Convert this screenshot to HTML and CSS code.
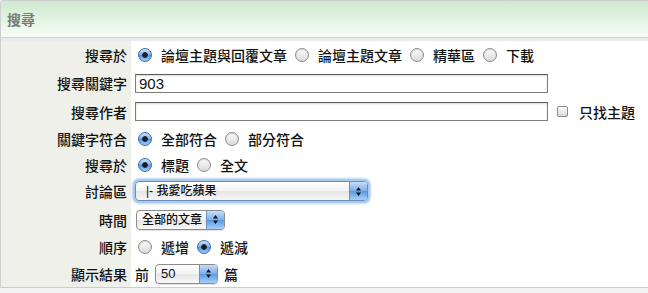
FILE: index.html
```html
<!DOCTYPE html>
<html lang="zh-Hant">
<head>
    <meta charset="UTF-8">
    <title>搜尋</title>
    <link rel="stylesheet" href="styles.css">
</head>
<body>
<div class="panel">
    <div class="panel-head">搜尋</div>
    <div class="search-form">
        <div class="label">搜尋於</div>
        <div class="field">
            <label class="opt"><input type="radio" name="area" checked>論壇主題與回覆文章</label>
            <label class="opt"><input type="radio" name="area">論壇主題文章</label>
            <label class="opt"><input type="radio" name="area">精華區</label>
            <label class="opt"><input type="radio" name="area">下載</label>
        </div>

        <div class="label">搜尋關鍵字</div>
        <div class="field">
            <input type="text" class="text-input" value="903">
        </div>

        <div class="label">搜尋作者</div>
        <div class="field">
            <input type="text" class="text-input">
            <label class="opt check-opt"><input type="checkbox">只找主題</label>
        </div>

        <div class="label">關鍵字符合</div>
        <div class="field">
            <label class="opt"><input type="radio" name="match" checked>全部符合</label>
            <label class="opt"><input type="radio" name="match">部分符合</label>
        </div>

        <div class="label">搜尋於</div>
        <div class="field">
            <label class="opt"><input type="radio" name="scope" checked>標題</label>
            <label class="opt"><input type="radio" name="scope">全文</label>
        </div>

        <div class="label">討論區</div>
        <div class="field">
            <div class="popup popup-forum focused">
                <span class="popup-text">|- 我愛吃蘋果</span>
                <span class="popup-arrow">
                    <svg width="7" height="11" viewBox="0 0 7 11"><path d="M3.5 1L6 4.5H1z M1 6.5H6L3.5 10z" fill="#111"/></svg>
                </span>
            </div>
        </div>

        <div class="label">時間</div>
        <div class="field">
            <div class="popup popup-time">
                <span class="popup-text">全部的文章</span>
                <span class="popup-arrow">
                    <svg width="7" height="11" viewBox="0 0 7 11"><path d="M3.5 1L6 4.5H1z M1 6.5H6L3.5 10z" fill="#111"/></svg>
                </span>
            </div>
        </div>

        <div class="label">順序</div>
        <div class="field">
            <label class="opt"><input type="radio" name="order">遞增</label>
            <label class="opt"><input type="radio" name="order" checked>遞減</label>
        </div>

        <div class="label">顯示結果</div>
        <div class="field">
            <span>前</span>
            <div class="popup popup-count">
                <span class="popup-text num">50</span>
                <span class="popup-arrow">
                    <svg width="7" height="11" viewBox="0 0 7 11"><path d="M3.5 1L6 4.5H1z M1 6.5H6L3.5 10z" fill="#111"/></svg>
                </span>
            </div>
            <span>篇</span>
        </div>
    </div>
</div>
</body>
</html>
```

FILE: styles.css
```css
body {
    margin: 0;
    font-family: "Liberation Sans", "Noto Sans CJK TC", sans-serif;
    font-size: 14px;
    font-weight: 500;
    color: #111;
    background-color: #f3f3f3;
}
.panel {
    background-color: #fff;
    border-left: 1px solid #cfcfcf;
    border-top: 1px solid #cfcfcf;
    border-top-left-radius: 4px;
    overflow: hidden;
}
.panel-head {
    height: 36px;
    line-height: 38px;
    padding-left: 6px;
    font-weight: bold;
    color: #777c77;
    background: linear-gradient(#cfe8cf, #f7fef5);
    border-bottom: 1px solid #d3d3d3;
}
.search-form {
    display: grid;
    grid-template-columns: 130px 1fr;
    grid-template-rows: 28px 28px 29px 26px 25px 28px 29px 26px 27px;
    border-top: 3px solid #ebebeb;
    border-bottom: 1px solid #cdcdcd;
}
.label {
    display: flex;
    align-items: center;
    justify-content: flex-end;
    padding-right: 4px;
    background-color: #eff0e9;
}
.field {
    display: flex;
    align-items: center;
    padding-left: 4px;
    gap: 6px;
}
.opt {
    display: flex;
    align-items: center;
    gap: 9px;
    margin-right: 2px;
}
.opt:first-child {
    margin-left: 3px;
}
input[type="radio"] {
    appearance: none;
    width: 14px;
    height: 14px;
    margin: 0;
    border-radius: 50%;
    border: 1px solid #8d8d8d;
    background: linear-gradient(#fdfdfd, #dadada);
    box-shadow: inset 0 1px 1px rgba(0, 0, 0, 0.15);
}
input[type="radio"]:checked {
    border-color: #3f6ca5;
    background: radial-gradient(circle, #1b1b2b 0 2.4px, transparent 3.2px),
                linear-gradient(#cfe4fb, #79aeec 50%, #5093e2 51%, #a4cdf8);
    box-shadow: none;
}
input[type="checkbox"] {
    appearance: none;
    width: 11px;
    height: 11px;
    margin: 0;
    border: 1px solid #8a8a8a;
    border-radius: 2px;
    background: linear-gradient(#fdfdfd, #d8d8d8);
}
.check-opt {
    margin-left: 3px;
    gap: 11px;
}
.text-input {
    width: 413px;
    height: 19px;
    box-sizing: border-box;
    margin: 0;
    padding: 0 3px;
    border: 1px solid #7d7d7d;
    border-top-color: #5a5a5a;
    box-shadow: inset 0 1px 2px rgba(0, 0, 0, 0.15);
    font-family: "Liberation Sans", sans-serif;
    font-size: 15px;
    color: #111;
}
.popup {
    display: flex;
    height: 20px;
    box-sizing: border-box;
    border: 1px solid #8c8c8c;
    border-radius: 4px;
    overflow: hidden;
    font-size: 12px;
    background: linear-gradient(#fff, #f2f2f2 50%, #e5e5e5 51%, #f8f8f8);
    box-shadow: 0 1px 1px rgba(0, 0, 0, 0.12);
}
.popup-text {
    flex: 1;
    padding-left: 5px;
    line-height: 18px;
    white-space: nowrap;
}
.popup-arrow {
    width: 17px;
    display: flex;
    align-items: center;
    justify-content: center;
    border-left: 1px solid #6f8fb6;
    background: linear-gradient(#c6ddf8, #7badec 50%, #5a97e4 51%, #a7d0f9);
}
.popup.focused {
    overflow: visible;
    border-color: #6d8bb4;
    box-shadow: 0 0 0 2px #a9cbf0, 0 0 3px 2px #80ace2;
}
.popup.focused .popup-arrow {
    border-radius: 0 3px 3px 0;
}
.popup-forum {
    width: 233px;
}
.popup-forum .popup-text {
    padding-left: 10px;
}
.popup-time {
    width: 89px;
    margin-left: 1px;
}
.popup-count {
    width: 63px;
}
.num {
    font-size: 13px;
}
```
